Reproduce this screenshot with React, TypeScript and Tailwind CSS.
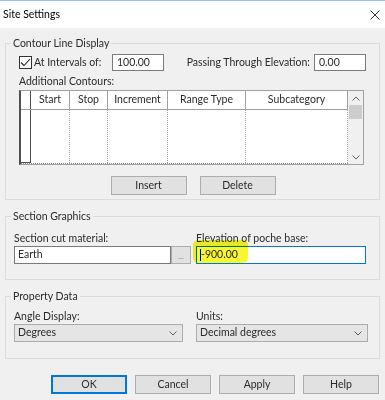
import React from "react";

const font = { fontFamily: 'Lato, "Noto Sans", "Liberation Sans", sans-serif' };

const Chevron = ({ up = false }: { up?: boolean }) => (
  <svg width="8" height="5" viewBox="0 0 8 5" className="block">
    <path
      d={up ? "M0.5 4.5 L4 1 L7.5 4.5" : "M0.5 0.5 L4 4 L7.5 0.5"}
      fill="none"
      stroke="#606060"
      strokeWidth="1"
    />
  </svg>
);

const Group: React.FC<{ title: string; className?: string; children: React.ReactNode }> = ({
  title,
  className = "",
  children,
}) => (
  <fieldset className={`border border-[#dcdcdc] ${className}`}>
    <legend className="ml-[5px] px-[2px] leading-[16px]">{title}</legend>
    {children}
  </fieldset>
);

const Btn: React.FC<{ label: string; primary?: boolean }> = ({ label, primary }) => (
  <button
    className={`w-[76px] h-[19px] bg-[#e1e1e1] border leading-none ${
      primary ? "border-[#0078d7] shadow-[inset_0_0_0_1px_#0078d7]" : "border-[#adadad]"
    }`}
  >
    {label}
  </button>
);

const Select: React.FC<{ value: string; width: string }> = ({ value, width }) => (
  <div
    className={`${width} h-[18px] bg-[#e5e5e5] border border-[#acacac] flex items-center justify-between pl-[3px] pr-[5px]`}
  >
    <span>{value}</span>
    <Chevron />
  </div>
);

const columns = [
  { name: "Start", w: "w-[39px]" },
  { name: "Stop", w: "w-[38px]" },
  { name: "Increment", w: "w-[60px]" },
  { name: "Range Type", w: "w-[78px]" },
  { name: "Subcategory", w: "w-[102px]" },
];

export default function App() {
  return (
    <div
      className="w-[385px] h-[400px] bg-[#f0f0f0] text-[10.5px] text-[#2a2a2a] border-t border-[#9cc3e6] overflow-hidden"
      style={font}
    >
      {/* title bar */}
      <div className="h-[27px] bg-white flex items-center justify-between pl-[3px] pr-[5px]">
        <span className="text-[10.5px] text-black">Site Settings</span>
        <svg width="10" height="10" viewBox="0 0 10 10">
          <path d="M0.5 0.5 L9.5 9.5 M9.5 0.5 L0.5 9.5" stroke="#333" strokeWidth="1" />
        </svg>
      </div>

      <div className="px-[5px]">
        {/* Contour Line Display */}
        <Group title="Contour Line Display" className="mt-[7px] h-[165px]">
          <div className="mt-[3px] h-[17px] flex items-center">
            <div className="ml-[13px] w-[13px] h-[13px] border border-[#333] bg-white flex items-center justify-center">
              <svg width="11" height="9" viewBox="0 0 11 9">
                <path d="M1 4.5 L4 7.5 L10 1" fill="none" stroke="#222" strokeWidth="1.1" />
              </svg>
            </div>
            <span className="ml-[2px] w-[78px]">At Intervals of:</span>
            <div className="w-[52px] h-[17px] bg-white border border-[#7a7a7a] flex items-center pl-[4px]">
              100.00
            </div>
            <span className="w-[150px] text-right pr-[4px]">Passing Through Elevation:</span>
            <div className="w-[52px] h-[17px] bg-white border border-[#7a7a7a] flex items-center pl-[4px]">
              0.00
            </div>
          </div>
          <div className="mt-[2px] ml-[13px] leading-[16px]">Additional Contours:</div>

          {/* table */}
          <div className="mt-[1px] ml-[13px] w-[345px] h-[75px] flex bg-white border border-[#a0a0a0] border-l-2 border-l-[#505050]">
            <div className="flex-1 flex flex-col">
              <div className="h-[19px] flex border-b border-[#a0a0a0]">
                <div className="w-[10px] border-r border-[#505050]" />
                {columns.map((c) => (
                  <div
                    key={c.name}
                    className={`${c.w} border-r border-[#a0a0a0] flex items-center justify-center`}
                  >
                    {c.name}
                  </div>
                ))}
              </div>
              <div className="flex-1 flex border-b border-dotted border-[#909090]">
                <div className="w-[10px] border-r border-[#505050] border-b border-b-[#505050]" />
                {columns.map((c) => (
                  <div key={c.name} className={`${c.w} border-r border-dotted border-[#a0a0a0]`} />
                ))}
              </div>
            </div>
            <div className="w-[17px] bg-[#f0f0f0] flex flex-col items-center">
              <div className="h-[14px] flex items-center">
                <Chevron up />
              </div>
              <div className="w-[13px] h-[14px] bg-[#cdcdcd]" />
              <div className="flex-1" />
              <div className="h-[14px] flex items-center">
                <Chevron />
              </div>
            </div>
          </div>

          <div className="mt-[11px] flex justify-center gap-[13px] pl-[1px]">
            <Btn label="Insert" />
            <Btn label="Delete" />
          </div>
        </Group>

        {/* Section Graphics */}
        <Group title="Section Graphics" className="mt-[8px] h-[72px]">
          <div className="mt-[6px] flex">
            <div className="ml-[8px] w-[177px]">
              <div className="leading-[16px]">Section cut material:</div>
              <div className="flex">
                <div className="w-[157px] h-[18px] bg-white border border-[#7a7a7a] flex items-center pl-[3px]">
                  Earth
                </div>
                <div className="w-[20px] h-[18px] bg-[#e1e1e1] border border-[#adadad] flex items-end justify-center pb-[3px] text-[8px] leading-none text-[#888]">
                  ...
                </div>
              </div>
            </div>
            <div className="ml-[5px] relative">
              <div className="leading-[16px]">Elevation of poche base:</div>
              <div className="w-[170px] h-[18px] bg-white border border-[#0078d7] flex items-center pl-[3px]">
                <span className="w-px h-[12px] bg-black" />
                <span>-900.00</span>
              </div>
              <div className="absolute left-[-3px] top-[10px] w-[55px] h-[23px] rounded-[5px] bg-[#f4f400] opacity-80 mix-blend-multiply" />
            </div>
          </div>
        </Group>

        {/* Property Data */}
        <Group title="Property Data" className="mt-[8px] h-[71px]">
          <div className="mt-[4px] flex">
            <div className="ml-[8px] w-[182px]">
              <div className="leading-[16px]">Angle Display:</div>
              <Select value="Degrees" width="w-[169px]" />
            </div>
            <div>
              <div className="leading-[16px]">Units:</div>
              <Select value="Decimal degrees" width="w-[172px]" />
            </div>
          </div>
        </Group>

        <div className="mt-[16px] flex justify-end gap-[8px] pr-[1px]">
          <Btn label="OK" primary />
          <Btn label="Cancel" />
          <Btn label="Apply" />
          <Btn label="Help" />
        </div>
      </div>
    </div>
  );
}
